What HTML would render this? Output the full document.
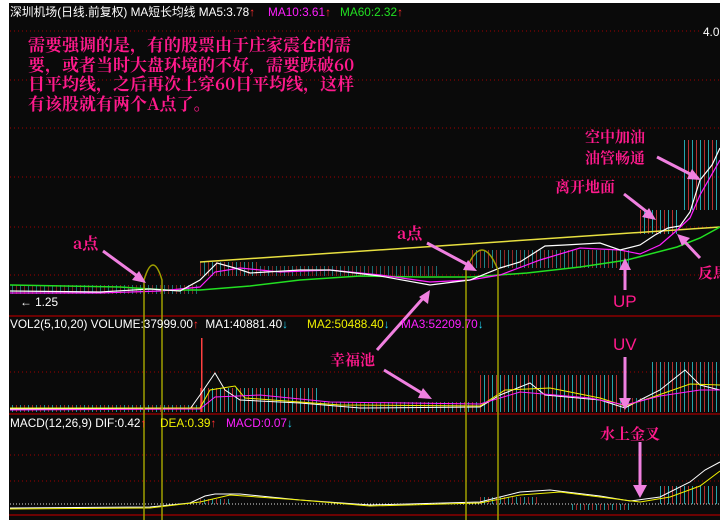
<!DOCTYPE html>
<html><head><meta charset="utf-8">
<style>
*{margin:0;padding:0}
body{width:720px;height:520px;background:#fff;overflow:hidden;position:relative;font-family:"Liberation Sans","Noto Sans CJK SC",sans-serif}
#bg{position:absolute;left:9px;top:3px;width:711px;height:517px;background:#0a0a0a}
.t{position:absolute;white-space:nowrap;font-size:11.8px;line-height:14px}
.p{position:absolute;white-space:nowrap;color:#ff1a8c;font-family:"Noto Serif CJK SC","WenQuanYi Zen Hei",serif;font-weight:bold}
.ar{color:#ff3030;font-weight:bold}.dn{color:#22d0f0;font-weight:bold}
</style></head><body>
<div id="bg"></div>
<svg style="position:absolute;left:0;top:0" width="720" height="520">
<defs>
<pattern id="bars" width="8" height="10" patternUnits="userSpaceOnUse">
<rect x="0" y="0" width="1" height="10" fill="#ff4040"/><rect x="4" y="0" width="1" height="10" fill="#30e8f0"/>
</pattern>
</defs>
<g stroke="#a00000" stroke-dasharray="1 3" stroke-width="1">
<line x1="10" y1="31" x2="700" y2="31"/><line x1="10" y1="80" x2="720" y2="80"/>
<line x1="10" y1="128" x2="720" y2="128"/><line x1="10" y1="177" x2="720" y2="177"/>
<line x1="10" y1="227" x2="720" y2="227"/><line x1="10" y1="275" x2="720" y2="275"/>
<line x1="10" y1="372" x2="720" y2="372"/><line x1="10" y1="455" x2="720" y2="455"/>
<line x1="10" y1="481" x2="720" y2="481"/>
</g>
<line x1="10" y1="504" x2="720" y2="504" stroke="#ddd" stroke-dasharray="1 2"/>
<g stroke="#8b0000" stroke-width="1.5"><line x1="9" y1="316" x2="720" y2="316"/><line x1="9" y1="414" x2="720" y2="414"/><line x1="9" y1="515" x2="720" y2="515"/></g>
<!-- price bars -->
<rect x="10" y="285" width="190" height="9" fill="url(#bars)" opacity=".45"/>
<rect x="200" y="262" width="60" height="14" fill="url(#bars)" opacity=".55"/>
<rect x="260" y="266" width="180" height="10" fill="url(#bars)" opacity=".45"/>
<rect x="470" y="250" width="160" height="18" fill="url(#bars)" opacity=".55"/>
<rect x="640" y="210" width="40" height="24" fill="url(#bars)" opacity=".7"/>
<rect x="684" y="140" width="36" height="70" fill="url(#bars)" opacity=".7"/>
<!-- trend & MAs -->
<polyline points="200,262 720,227" stroke="#e8e040" stroke-width="1.5" fill="none"/>
<polyline points="10,285 120,287 167,290 200,290 250,286 300,280 360,276 420,277 470,277 527,273 580,267 627,260 677,247 700,238 720,227" stroke="#22e022" stroke-width="1.5" fill="none"/>
<polyline points="10,293 100,293 160,291 200,287 215,272 240,268 280,272 330,270 380,275 430,282 470,280 500,275 540,260 580,248 620,250 640,254 660,245 675,232 690,218 700,195 720,160" stroke="#ff20ff" stroke-width="1.2" fill="none"/>
<polyline points="10,291 100,292 150,289 180,291 200,280 217,263 235,268 250,273 300,270 330,270 380,276 430,285 470,280 500,268 520,262 545,246 565,245 600,243 620,250 640,245 655,235 668,228 680,226 690,212 700,180 712,165 720,148" stroke="#fff" stroke-width="1.2" fill="none"/>
<!-- volume -->
<rect x="10" y="405" width="190" height="7" fill="url(#bars)" opacity=".6"/>
<rect x="200" y="388" width="120" height="24" fill="url(#bars)" opacity=".7"/>
<rect x="320" y="402" width="160" height="10" fill="url(#bars)" opacity=".6"/>
<rect x="480" y="375" width="140" height="37" fill="url(#bars)" opacity=".7"/>
<rect x="620" y="398" width="30" height="14" fill="url(#bars)" opacity=".6"/>
<rect x="650" y="362" width="70" height="50" fill="url(#bars)" opacity=".7"/>
<rect x="201" y="338" width="1.5" height="74" fill="#ff4040"/>
<polyline points="10,409 190,409 200,395 215,373 225,390 240,400 300,403 360,408 480,407 500,395 530,383 545,395 600,400 625,408 640,400 660,390 685,370 700,385 720,390" stroke="#fff" fill="none"/>
<polyline points="10,408 200,408 210,390 235,386 245,398 340,405 480,406 505,390 550,388 600,398 625,406 650,398 690,384 720,385" stroke="#f0f000" fill="none"/>
<polyline points="10,410 200,409 215,397 260,395 330,402 480,404 520,392 590,398 625,405 660,396 700,390 720,390" stroke="#ff20ff" fill="none"/>
<!-- macd -->
<rect x="200" y="499" width="30" height="5" fill="url(#bars)" opacity=".6"/>
<rect x="480" y="497" width="60" height="7" fill="url(#bars)" opacity=".6"/>
<rect x="570" y="504" width="60" height="6" fill="url(#bars)" opacity=".6"/>
<rect x="660" y="486" width="60" height="18" fill="url(#bars)" opacity=".7"/>
<polyline points="10,508 150,507 190,503 205,496 215,494 240,494 300,500 370,505 480,502 520,492 550,490 600,496 630,501 660,497 690,482 705,470 720,462" stroke="#fff" fill="none"/>
<polyline points="10,509 150,508 200,502 230,495 300,500 370,506 480,503 520,495 560,492 600,497 640,502 670,497 700,486 720,471" stroke="#f0f000" fill="none"/>
<!-- ellipses -->
<path d="M144,520 V280 Q153,250 162,280 V520" stroke="#a0a000" stroke-width="1.5" fill="none"/>
<path d="M466,520 V270 Q482,230 498,270 V520" stroke="#a0a000" stroke-width="1.5" fill="none"/>
<!-- arrows -->
<g stroke="#f080e0" stroke-width="3" fill="#f080e0">
<line x1="103" y1="251" x2="140" y2="278"/><polygon points="146,283 132,280 139,271" stroke="none"/>
<line x1="427" y1="243" x2="470" y2="266"/><polygon points="477,271 463,270 468,260" stroke="none"/>
<line x1="377" y1="350" x2="425" y2="296"/><polygon points="430,290 428,304 419,297" stroke="none"/>
<line x1="384" y1="370" x2="425" y2="395"/><polygon points="432,399 418,398 423,388" stroke="none"/>
<line x1="657" y1="157" x2="694" y2="176"/><polygon points="701,180 687,179 692,169" stroke="none"/>
<line x1="624" y1="194" x2="651" y2="215"/><polygon points="656,220 642,217 649,208" stroke="none"/>
<line x1="700" y1="258" x2="683" y2="240"/><polygon points="677,234 690,238 682,246" stroke="none"/>
<line x1="625" y1="290" x2="625" y2="266"/><polygon points="625,258 619,270 631,270" stroke="none"/>
<line x1="625" y1="357" x2="625" y2="402"/><polygon points="625,410 619,398 631,398" stroke="none"/>
<line x1="640" y1="442" x2="640" y2="490"/><polygon points="640,498 633,485 647,485" stroke="none"/>
</g>
</svg>
<div class="t" style="left:10px;top:5px;color:#fff">深圳机场(日线.前复权) MA短长均线 MA5:3.78<span class="ar">↑</span></div>
<div class="t" style="left:268px;top:5px;color:#ff20ff">MA10:3.61<span class="ar">↑</span></div>
<div class="t" style="left:340px;top:5px;color:#22e022">MA60:2.32<span class="ar">↑</span></div>
<div class="t" style="left:703px;top:25px;color:#fff">4.0</div>
<div class="t" style="left:20px;top:295px;color:#fff">← 1.25</div>
<div class="t" style="left:10px;top:317px;color:#fff">VOL2(5,10,20) VOLUME:37999.00<span class="ar">↑</span> &nbsp;MA1:40881.40<span class="dn">↓</span></div>
<div class="t" style="left:307px;top:317px;color:#f0f000">MA2:50488.40<span class="dn">↓</span></div>
<div class="t" style="left:401px;top:317px;color:#ff20ff">MA3:52209.70<span class="dn">↓</span></div>
<div class="t" style="left:10px;top:416px;color:#fff">MACD(12,26,9) DIF:0.42<span class="ar">↑</span></div>
<div class="t" style="left:160px;top:416px;color:#f0f000">DEA:0.39<span class="ar">↑</span></div>
<div class="t" style="left:226px;top:416px;color:#ff20ff">MACD:0.07<span class="dn">↓</span></div>
<div class="p" style="left:28px;top:34px;font-size:17px;line-height:19.5px">需要强调的是，有的股票由于庄家震仓的需<br>要，或者当时大盘环境的不好，需要跌破60<br>日平均线，之后再次上穿60日平均线，这样<br>有该股就有两个A点了。</div>
<div class="p" style="left:73px;top:231px;font-size:16px">a点</div>
<div class="p" style="left:397px;top:221px;font-size:16px">a点</div>
<div class="p" style="left:330px;top:349px;font-size:15px">幸福池</div>
<div class="p" style="left:585px;top:126px;font-size:15px;line-height:21px">空中加油<br>油管畅通</div>
<div class="p" style="left:555px;top:176px;font-size:15px">离开地面</div>
<div class="p" style="left:698px;top:262px;font-size:15px">反馬</div>
<div class="p" style="left:613px;top:292px;font-size:17px;font-family:'Liberation Sans',sans-serif;font-weight:normal">UP</div>
<div class="p" style="left:613px;top:335px;font-size:17px;font-family:'Liberation Sans',sans-serif;font-weight:normal">UV</div>
<div class="p" style="left:600px;top:423px;font-size:15px">水上金叉</div>
</body></html>
